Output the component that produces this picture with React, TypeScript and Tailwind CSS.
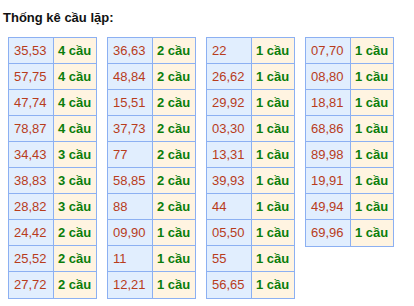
const tables: [string, number][][] = [
  [
    ["35,53", 4], ["57,75", 4], ["47,74", 4], ["78,87", 4], ["34,43", 3],
    ["38,83", 3], ["28,82", 3], ["24,42", 2], ["25,52", 2], ["27,72", 2],
  ],
  [
    ["36,63", 2], ["48,84", 2], ["15,51", 2], ["37,73", 2], ["77", 2],
    ["58,85", 2], ["88", 2], ["09,90", 1], ["11", 1], ["12,21", 1],
  ],
  [
    ["22", 1], ["26,62", 1], ["29,92", 1], ["03,30", 1], ["13,31", 1],
    ["39,93", 1], ["44", 1], ["05,50", 1], ["55", 1], ["56,65", 1],
  ],
  [
    ["07,70", 1], ["08,80", 1], ["18,81", 1], ["68,86", 1],
    ["89,98", 1], ["19,91", 1], ["49,94", 1], ["69,96", 1],
  ],
];

function CauTable({ rows }: { rows: [string, number][] }) {
  return (
    <div className="w-[89px] border border-[#8cb0f2]">
      {rows.map(([pair, count], i) => (
        <div
          key={pair}
          className={`flex h-[26px] ${i < rows.length - 1 ? "border-b border-[#8cb0f2]" : "h-[25px]"}`}
        >
          <div className="flex w-[45px] items-center border-r border-[#8cb0f2] bg-[#e1eefe] pl-[5px] text-[13px] text-[#b83c1c]">
            {pair}
          </div>
          <div className="flex flex-1 items-center bg-[#fff4e1] pl-[4px] text-[13px] font-bold text-[#0b7d0b]">
            {count} cầu
          </div>
        </div>
      ))}
    </div>
  );
}

export default function App() {
  return (
    <div className="h-[306px] w-[414px] bg-white font-['Liberation_Sans',Arial,sans-serif]">
      <h2 className="pl-[3px] pt-[10px] text-[13px] leading-[15px] font-bold text-[#111]">Thống kê cầu lặp:</h2>
      <div className="mt-[12px] flex items-start gap-[10px] pl-[8px]">
        {tables.map((rows, i) => (
          <CauTable key={i} rows={rows} />
        ))}
      </div>
    </div>
  );
}
